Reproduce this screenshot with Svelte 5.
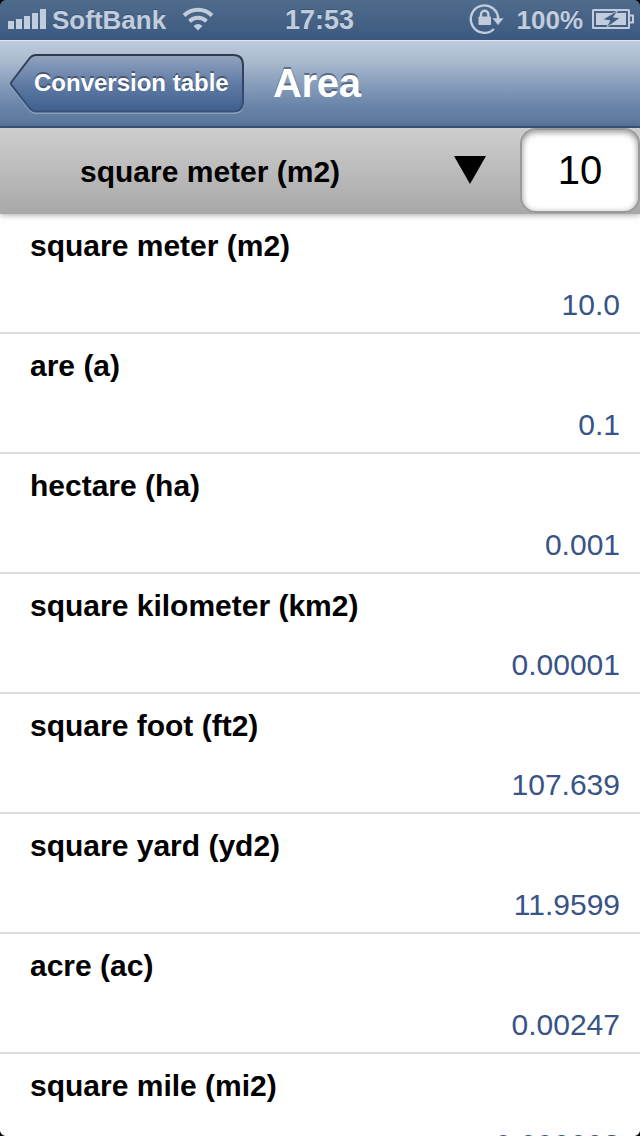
<!--
  Unit conversion screen: status bar, navigation bar,
  source unit selector and the list of converted values.
-->

<script lang="ts">
  type Row = { label: string; value: string };

  let amount = $state('10');
  let unit = $state('square meter (m2)');

  const rows: Row[] = [
    { label: 'square meter (m2)', value: '10.0' },
    { label: 'are (a)', value: '0.1' },
    { label: 'hectare (ha)', value: '0.001' },
    { label: 'square kilometer (km2)', value: '0.00001' },
    { label: 'square foot (ft2)', value: '107.639' },
    { label: 'square yard (yd2)', value: '11.9599' },
    { label: 'acre (ac)', value: '0.00247' },
    { label: 'square mile (mi2)', value: '0.000003' }
  ];
</script>

<div class="screen">
  <!-- ── Status bar ── -->
  <div class="status-bar">
    <div class="status-left">
      <svg class="signal" width="38" height="20" viewBox="0 0 38 20" aria-hidden="true">
        <rect x="0" y="12" width="6" height="8" />
        <rect x="8" y="10" width="6" height="10" />
        <rect x="16" y="7" width="6" height="13" />
        <rect x="24" y="4" width="6" height="16" />
        <rect x="32" y="0" width="6" height="20" />
      </svg>
      <span class="carrier">SoftBank</span>
      <svg class="wifi" width="32" height="24" viewBox="0 0 32 24" aria-hidden="true">
        <path d="M2 8.5 A20 20 0 0 1 30 8.5" />
        <path d="M7.5 14.2 A12.5 12.5 0 0 1 24.5 14.2" />
        <path class="solid" d="M16 23.500 L11.500 19 Q16 15 20.500 19 Z" />
      </svg>
    </div>
    <span class="clock">17:53</span>
    <div class="status-right">
      <svg class="rotation-lock" width="36" height="32" viewBox="0 0 36 32" aria-hidden="true">
        <path d="M25 26 A13.700 13.700 0 1 1 29.200 16" />
        <path class="solid" d="M23.500 15.300 H34.500 L29 22 Z" />
        <rect x="9.500" y="13.500" width="12.500" height="8.500" rx="0.8" />
        <path class="shackle" d="M12 14 V11.500 a3.700 3.700 0 0 1 7.400 0 V14" />
      </svg>
      <span class="percent">100%</span>
      <svg class="battery" width="42" height="20" viewBox="0 0 42 20" aria-hidden="true">
        <rect class="case" x="1" y="1" width="36" height="18" rx="0.5" />
        <path class="case" d="M38 6.500 H41 V13.500 H38" />
        <rect x="4" y="4" width="30" height="12" />
        <path class="bolt" d="M26 1.500 L10.500 10.500 L18 11.800 L14 19 L28 9 L21.500 8 Z" />
      </svg>
    </div>
  </div>

  <!-- ── Navigation bar ── -->
  <header class="nav-bar">
    <button class="back" type="button">
      <svg class="back-shape" width="234" height="62" viewBox="0 0 234 62" aria-hidden="true">
        <defs>
          <linearGradient id="back-fill" x1="0" y1="0" x2="0" y2="1">
            <stop offset="0" stop-color="#93a3be" />
            <stop offset="0.5" stop-color="#617ca5" />
            <stop offset="1" stop-color="#3d608f" />
          </linearGradient>
          <linearGradient id="back-edge" x1="0" y1="0" x2="0" y2="1">
            <stop offset="0" stop-color="#2e3b50" />
            <stop offset="1" stop-color="#365277" />
          </linearGradient>
        </defs>
        <path
          class="back-glow"
          d="M26 3.500 H223 Q233 3.500 233 13.500 V50 Q233 60 223 60 H26 Q22 60 19 56 L1.500 33 Q0.500 31.500 1.500 30 L19 7.500 Q22 3.500 26 3.500 Z"
        />
        <path
          class="back-body"
          d="M26 2 H223 Q233 2 233 12 V48.500 Q233 58.500 223 58.500 H26 Q22 58.500 19 54.500 L1.500 32 Q0.500 30.500 1.500 29 L19 6 Q22 2 26 2 Z"
        />
      </svg>
      <span class="back-label">Conversion table</span>
    </button>
    <h1 class="title">Area</h1>
  </header>

  <!-- ── Source unit and amount ── -->
  <div class="selector">
    <button class="unit" type="button">
      <span class="unit-name">{unit}</span>
      <svg width="32" height="28" viewBox="0 0 32 28" aria-hidden="true">
        <path d="M0 0 H32 L16 28 Z" />
      </svg>
    </button>
    <input class="amount" type="text" aria-label="Amount" bind:value={amount} />
  </div>

  <!-- ── Converted values ── -->
  <ul class="results">
    {#each rows as row}
      <li class="row">
        <span class="label">{row.label}</span>
        <span class="value">{row.value}</span>
      </li>
    {/each}
  </ul>

  <!-- Rounded display corners -->
  <svg class="corner top-left" width="5" height="5" viewBox="0 0 5 5"><path d="M0 0 H5 Q1 1 0 5 Z" /></svg>
  <svg class="corner top-right" width="5" height="5" viewBox="0 0 5 5"><path d="M0 0 H5 Q1 1 0 5 Z" /></svg>
  <svg class="corner bottom-left" width="5" height="5" viewBox="0 0 5 5"><path d="M0 0 H5 Q1 1 0 5 Z" /></svg>
  <svg class="corner bottom-right" width="5" height="5" viewBox="0 0 5 5"><path d="M0 0 H5 Q1 1 0 5 Z" /></svg>
</div>

<style>
  :global(body) {
    margin: 0;
    background: #fff;
  }

  .screen {
    position: relative;
    display: flex;
    flex-direction: column;
    width: 640px;
    height: 1136px;
    overflow: hidden;
    background: #fff;
    color: #000;
    font-family: 'Liberation Sans', Arial, sans-serif;
  }

  button {
    padding: 0;
    border: 0;
    background: none;
    color: inherit;
    font: inherit;
  }

  /* ── Status bar ── */

  .status-bar {
    display: grid;
    grid-template-columns: 1fr auto 1fr;
    align-items: center;
    flex: none;
    height: 40px;
    box-sizing: border-box;
    padding: 0 6px 0 8px;
    background: linear-gradient(#506c8c, #3b5980);
    color: #c1cddc;
    font-size: 26px;
    font-weight: 700;
    line-height: 40px;
    text-shadow: 0 -1px 0 rgba(30, 50, 80, 0.4);
  }

  .status-bar svg {
    fill: #c1cddc;
  }

  .status-left,
  .status-right {
    display: flex;
    align-items: center;
  }

  .status-right {
    justify-content: flex-end;
  }

  .signal {
    margin-right: 6px;
    margin-top: -2px;
  }

  .wifi {
    margin-left: 16px;
    margin-top: -2px;
  }

  .wifi path:not(.solid) {
    fill: none;
    stroke: #c1cddc;
    stroke-width: 4;
  }

  .clock {
    margin-right: 3px;
    font-size: 27px;
  }

  .rotation-lock {
    margin-right: 12px;
    margin-top: -2px;
  }

  .rotation-lock path:not(.solid) {
    fill: none;
    stroke: #c1cddc;
    stroke-width: 2.4;
  }

  .battery {
    margin-left: 9px;
    margin-top: -2px;
  }

  .battery .case {
    fill: none;
    stroke: #c1cddc;
    stroke-width: 2;
  }

  .battery .bolt {
    fill: #435f85;
    stroke: #c1cddc;
    stroke-width: 0.8;
  }

  /* ── Navigation bar ── */

  .nav-bar {
    display: flex;
    align-items: flex-start;
    flex: none;
    height: 88px;
    box-sizing: border-box;
    padding: 12px 0 0 10px;
    border-top: 1px solid #dfe7f0;
    border-bottom: 2px solid #3a587f;
    background: linear-gradient(#bdcbdc, #a9bacd 25%, #94a8c3 40%, #6b86ab 75%, #597399);
    color: #fff;
    font-weight: 700;
  }

  .back {
    display: grid;
    width: 234px;
    height: 62px;
  }

  .back-shape,
  .back-label {
    grid-area: 1 / 1;
  }

  .back-body {
    fill: url(#back-fill);
    stroke: url(#back-edge);
    stroke-width: 2;
  }

  .back-glow {
    fill: none;
    stroke: rgba(190, 205, 225, 0.45);
    stroke-width: 2;
  }

  .back-label {
    padding-left: 24px;
    font-size: 24px;
    line-height: 60px;
    text-align: left;
    text-shadow: 0 -2px 0 rgba(40, 55, 80, 0.6);
  }

  .title {
    margin: 0 0 0 29px;
    font-size: 40px;
    line-height: 60px;
    letter-spacing: -0.3px;
    text-shadow: 0 -2px 0 rgba(50, 65, 90, 0.6);
  }

  /* ── Selector ── */

  .selector {
    display: flex;
    flex: none;
    height: 86px;
    background: linear-gradient(#cecece, #a8a8a8);
    box-shadow: 0 1px 6px rgba(0, 0, 0, 0.35);
    z-index: 1;
  }

  .unit {
    display: flex;
    align-items: center;
    justify-content: space-between;
    flex: 1;
    padding: 0 34px 2px 80px;
    font-size: 30px;
    font-weight: 700;
  }

  .unit-name {
    padding-top: 4px;
  }

  .amount {
    width: 120px;
    height: 85px;
    box-sizing: border-box;
    padding: 0;
    border: 2px solid #999;
    border-radius: 16px;
    background: #fff;
    box-shadow: inset 0 2px 6px rgba(0, 0, 0, 0.45);
    color: #000;
    font-family: inherit;
    font-size: 40px;
    text-align: center;
  }

  /* ── Results ── */

  .results {
    margin: 0;
    padding: 0;
    list-style: none;
  }

  .row {
    display: flex;
    flex-direction: column;
    height: 120px;
    box-sizing: border-box;
    padding: 12px 20px 0 30px;
    border-bottom: 2px solid #dfdfdf;
    font-size: 30px;
    line-height: 40px;
  }

  .label {
    font-weight: 700;
  }

  .value {
    align-self: flex-end;
    margin-top: 19px;
    color: #385487;
  }

  /* ── Display corners ── */

  .corner {
    position: absolute;
    z-index: 2;
  }

  .top-left {
    top: 0;
    left: 0;
  }

  .top-right {
    top: 0;
    right: 0;
    transform: scaleX(-1);
  }

  .bottom-left {
    bottom: 0;
    left: 0;
    transform: scaleY(-1);
  }

  .bottom-right {
    right: 0;
    bottom: 0;
    transform: scale(-1);
  }
</style>
